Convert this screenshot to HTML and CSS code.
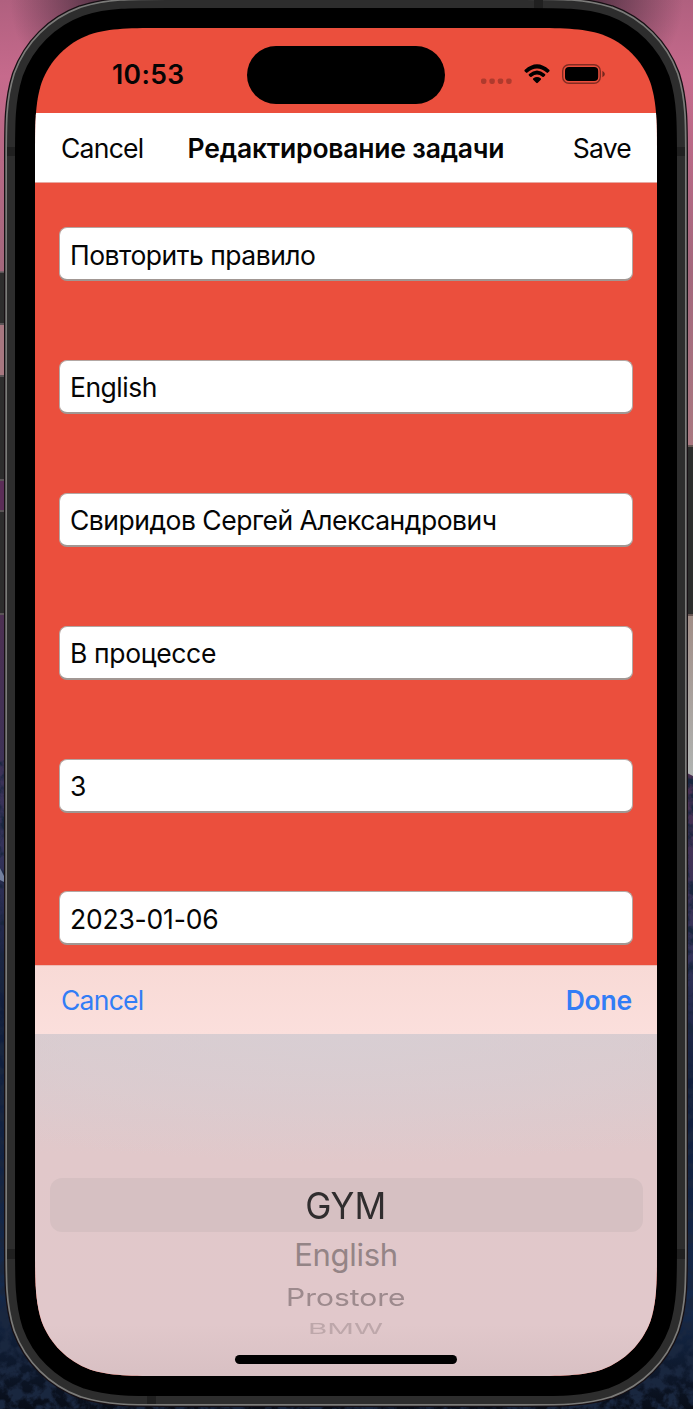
FILE: index.html
```html
<!DOCTYPE html>
<html lang="ru">
<head>
<meta charset="utf-8">
<title>Редактирование задачи</title>
<link rel="stylesheet" href="styles.css">
</head>
<body>
<svg class="wallpaper" viewBox="0 0 693 1409" aria-hidden="true">
  <defs>
    <linearGradient id="sky" x1="0" y1="0" x2="0" y2="1"><stop offset="0" stop-color="#b0607f"/><stop offset=".17" stop-color="#c66a8c"/><stop offset=".6" stop-color="#a3677c"/><stop offset="1" stop-color="#a97880"/></linearGradient>
    <radialGradient id="shade" gradientUnits="userSpaceOnUse" cx="110" cy="0" r="100"><stop offset="0" stop-color="#4c2f40"/><stop offset="1" stop-color="#4c2f40" stop-opacity="0"/></radialGradient>
    <radialGradient id="shade-right" gradientUnits="userSpaceOnUse" cx="583" cy="0" r="100"><stop offset="0" stop-color="#4c2f40"/><stop offset="1" stop-color="#4c2f40" stop-opacity="0"/></radialGradient>
    <linearGradient id="rock" x1="0" y1="0" x2="0" y2="1"><stop offset="0" stop-color="#4d3052"/><stop offset=".3" stop-color="#34335a"/><stop offset=".5" stop-color="#101e3c"/><stop offset=".85" stop-color="#152a4c"/><stop offset="1" stop-color="#080d18"/></linearGradient>
    <linearGradient id="sand" x1="0" y1="0" x2="0" y2="1"><stop offset="0" stop-color="#a08d86"/><stop offset="1" stop-color="#b0b4b2"/></linearGradient>
    <filter id="grain" x="0" y="0" width="100%" height="100%"><feTurbulence type="fractalNoise" baseFrequency=".09" numOctaves="4" seed="4"/><feColorMatrix values="0 0 0 0 .01  0 0 0 0 .02  0 0 0 0 .05  4 0 0 0 -1.6"/></filter>
    <path id="display" d="M133 0H489C527.3 0 546.4 0 567.1 6.5C589.6 14.7 607.3 32.4 615.5 54.9C622 75.6 622 94.7 622 133V1215C622 1253.3 622 1272.4 615.5 1293.1C607.3 1315.6 589.6 1333.3 567.1 1341.5C546.4 1348 527.3 1348 489 1348H133C94.7 1348 75.6 1348 54.9 1341.5C32.4 1333.3 14.7 1315.6 6.5 1293.1C0 1272.4 0 1253.3 0 1215V133C0 94.7 0 75.6 6.5 54.9C14.7 32.4 32.4 14.7 54.9 6.5C75.6 0 94.7 0 133 0Z"/>
  </defs>
  <rect width="693" height="450" fill="url(#sky)"/>
  <rect width="346" height="110" fill="url(#shade)"/>
  <rect x="346" width="347" height="110" fill="url(#shade-right)"/>
  <rect y="615" width="346" height="794" fill="url(#rock)"/>
  <rect x="346" y="760" width="347" height="649" fill="url(#rock)"/>
  <rect y="760" width="693" height="649" filter="url(#grain)"/>
  <rect y="272" width="8" height="343" fill="#2d2d2d"/>
  <rect y="325" width="5" height="50" fill="#a77780"/>
  <rect y="481" width="5" height="29" fill="#5b2d57"/>
  <path d="M0 272h5M0 324h5M0 376h5M0 480h5M0 511h5M0 614h5" stroke="#6b6265" stroke-width="1.5"/>
  <rect x="687" y="446" width="6" height="169" fill="#2c2d2c"/>
  <path d="M687 446h6M687 615h6" stroke="#665653" stroke-width="2"/>
  <path d="M687 616h6v160l-6-3z" fill="url(#sand)"/>
  <path d="M0 868l4 8v6l-4-2z" fill="#73809e"/>
  <g transform="translate(35 28)" stroke-linejoin="round">
    <use href="#display" fill="none" stroke="#171014" stroke-width="62"/>
    <use href="#display" fill="none" stroke="#7b7b79" stroke-width="59.4"/>
    <use href="#display" fill="none" stroke="#2d2d2d" stroke-width="56"/>
    <path d="M499-28h9v9h-9zM112 1368h9v8h-9zM-28 119h9v9h-9zM641 119h9v9h-9zM-28 1221h9v10h-9zM641 1221h9v10h-9z" fill="#202020"/>
    <use href="#display" fill="#000" stroke="#000" stroke-width="40"/>
  </g>
</svg>
<main class="phone">
    <div class="screen">
      <header class="status">
        <span class="time">10:53</span>
        <span class="island"></span>
        <svg class="indicators" viewBox="0 0 128 24" aria-hidden="true">
          <g fill="#000" opacity=".25"><rect x="1" y="14.5" width="5.4" height="5.4" rx="1.8"/><rect x="9.4" y="14.5" width="5.4" height="5.4" rx="1.8"/><rect x="17.8" y="14.5" width="5.4" height="5.4" rx="1.8"/><rect x="26.2" y="14.5" width="5.4" height="5.4" rx="1.8"/></g>
          <g transform="translate(0 -1)">
          <path d="M44.8 6.8Q57-4.3 69.2 6.8Q70 7.6 69.2 8.4L68 9.6Q67.3 10.2 66.6 9.6Q57 1.3 47.4 9.6Q46.7 10.2 46 9.6L44.8 8.4Q44 7.6 44.8 6.8Z"/>
          <path d="M49 11.1Q57 4 65 11.1Q65.8 11.9 65 12.7L63.8 13.8Q63.1 14.4 62.4 13.8Q57 9.2 51.6 13.8Q50.9 14.4 50.2 13.8L49 12.7Q48.2 11.9 49 11.1Z"/>
          <path d="M53.3 15.3Q57 12.5 60.7 15.3Q61.5 16 60.8 16.8L57.8 19.8Q57 20.5 56.2 19.8L53.2 16.8Q52.5 16 53.3 15.3Z"/>
          <rect x="82.7" y="1.7" width="37.6" height="18.6" rx="6.2" fill="none" stroke="#000" stroke-width="1.4" opacity=".45"/>
          <rect x="85" y="4" width="33.2" height="14" rx="4"/>
          <path d="M122.4 7.7Q127.4 11 122.4 14.3Z" opacity=".5"/>
          </g>
        </svg>
      </header>
      <nav class="navbar"><span class="cancel">Cancel</span><strong>Редактирование задачи</strong><span class="save">Save</span></nav>
      <section class="form">
        <div class="field"><span>Повторить правило</span></div>
        <div class="field"><span>English</span></div>
        <div class="field"><span>Свиридов Сергей Александрович</span></div>
        <div class="field short"><span>В процессе</span></div>
        <div class="field"><span>3</span></div>
        <div class="field date"><span>2023-01-06</span></div>
      </section>
      <div class="toolbar"><span class="cancel">Cancel</span><b>Done</b></div>
      <section class="picker">
        <div class="option selected"><span>GYM</span></div>
        <div class="option near"><span>English</span></div>
        <div class="option far"><span>Prostore</span></div>
        <div class="option last"><span>BMW</span></div>
        <div class="home"></div>
      </section>
    </div>
</main>
</body>
</html>
```
FILE: styles.css
```css
* { box-sizing: border-box; }
body { margin: 0; width: 693px; height: 1409px; overflow: hidden; position: relative; background: #101522; font-family: Inter, "Liberation Sans", sans-serif; color: #050505; }
.wallpaper { position: absolute; inset: 0; width: 693px; height: 1409px; }
.phone { position: relative; padding: 28px 36px 0 35px; }
.screen { width: 622px; height: 1348px; background: #eb4f3d; overflow: hidden; display: flex; flex-direction: column; clip-path: path("M133 0H489C527.3 0 546.4 0 567.1 6.5C589.6 14.7 607.3 32.4 615.5 54.9C622 75.6 622 94.7 622 133V1215C622 1253.3 622 1272.4 615.5 1293.1C607.3 1315.6 589.6 1333.3 567.1 1341.5C546.4 1348 527.3 1348 489 1348H133C94.7 1348 75.6 1348 54.9 1341.5C32.4 1333.3 14.7 1315.6 6.5 1293.1C0 1272.4 0 1253.3 0 1215V133C0 94.7 0 75.6 6.5 54.9C14.7 32.4 32.4 14.7 54.9 6.5C75.6 0 94.7 0 133 0Z"); }
span, strong, b { white-space: nowrap; }

.status { height: 85px; flex: none; display: grid; grid-template-columns: 212px 198px 1fr; padding-top: 18px; }
.time { padding: 11px 0 0 77px; font-size: 26.5px; line-height: 34px; font-weight: 600; letter-spacing: .35px; }
.island { height: 58px; border-radius: 29px; background: #000; }
.indicators { width: 128px; height: 24px; margin: 18px 0 0 35px; }

.navbar { flex: none; height: 70px; background: #fff; border-bottom: 1px solid #e8aaa3; display: grid; grid-template-columns: 1fr auto 1fr; align-items: center; padding: 1px 26px 0; font-size: 26.5px; }
.cancel { letter-spacing: -.75px; }
.save { letter-spacing: -.75px; text-align: right; }
.navbar strong { font-weight: 600; letter-spacing: -.2px; }
.form { flex: none; height: 782px; padding: 44px 24px 0; display: flex; flex-direction: column; gap: 78.9px; }
.field { flex: none; height: 54px; border: 1px solid #b3a7a3; border-bottom: 2px solid #a19793; border-radius: 8px; background: #fff; display: flex; align-items: center; padding: 2px 10px 0; font-size: 26.5px; letter-spacing: -.5px; }
.field.short { letter-spacing: -.35px; }
.field.date { letter-spacing: -.2px; }
.toolbar { flex: none; height: 69px; background: linear-gradient(#f8dad6, #fbdfdc); border-top: 1px solid #eebbb4; display: flex; align-items: center; justify-content: space-between; padding: 0 25px 1px 26px; font-size: 26.5px; color: #327df6; }
.toolbar b { font-weight: 600; letter-spacing: -.2px; }

.picker { flex: 1; display: flex; flex-direction: column; align-items: center; padding-top: 144px; background: radial-gradient(ellipse 560px 130px at 50% 0, #d8ced3, rgba(217,206,211,0)), linear-gradient(#dbcbce 0, #e1c8ca 120px, #e1c8cb 290px, #d8c0c3 100%); }
.option { flex: none; display: flex; align-items: center; justify-content: center; }
.option span { display: block; }
.selected { width: 593px; height: 54px; border-radius: 12px; background: #d6c0c2; color: #302d2e; font-size: 37px; }
.near { height: 46px; padding-bottom: 2px; font-size: 31px; letter-spacing: -.3px; color: #948486; }
.far { height: 40px; padding-bottom: 2px; font-size: 27px; color: #9d8a8d; }
.last { height: 21px; font-size: 24px; color: #bda7aa; }
.selected span { transform: scale(.95, 1); }
.far span { transform: scale(1.11, .88); }
.last span { transform: scale(1.23, .62); }
.home { width: 222px; height: 9px; border-radius: 5px; background: #000; margin-top: 16px; }
```
